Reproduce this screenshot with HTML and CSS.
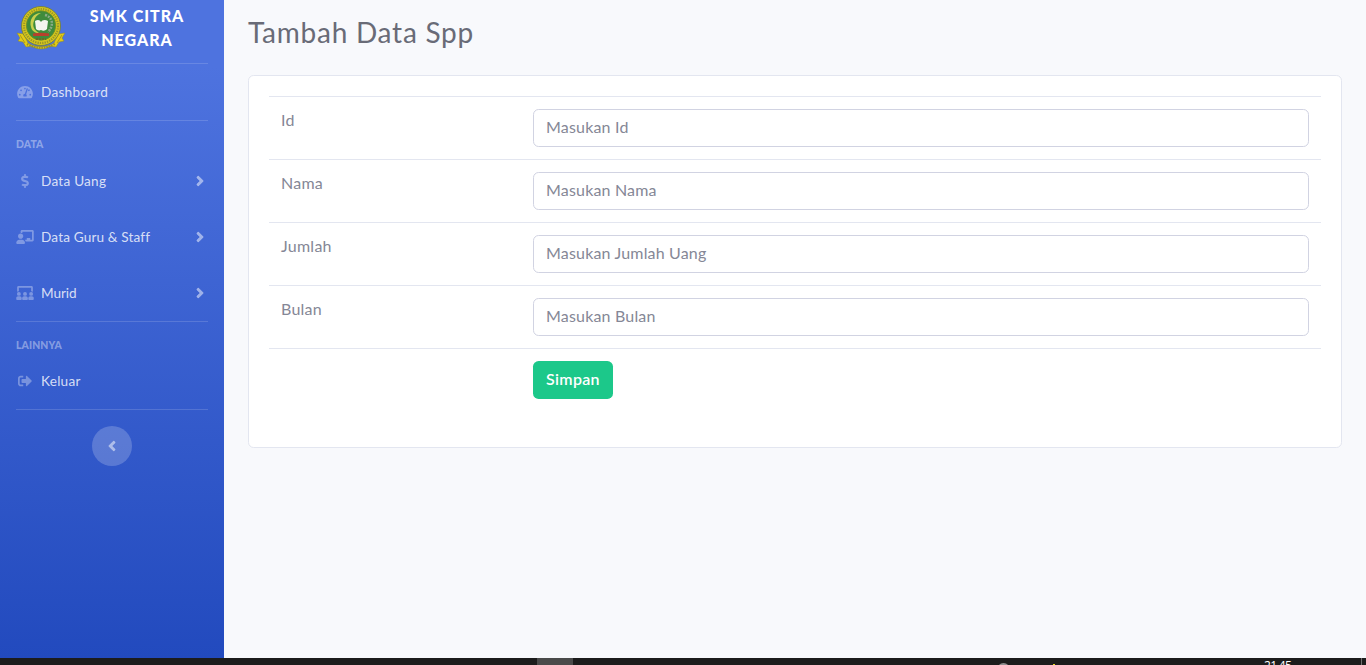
FILE: index.html
```html
<!DOCTYPE html>
<html lang="id">
<head>
<meta charset="utf-8">
<title>Tambah Data Spp</title>
<link rel="stylesheet" href="styles.css">
</head>
<body>
<div class="wrapper">
  <nav class="sidebar">
    <a class="brand">
      <svg class="logo" viewBox="0 0 50 46">
        <path d="M1 28l7 1 4 9c8 5 18 5 26 0l4-9 7-1-3 5 2 3-5 1-3 5-6-1c-6 4-12 4-18 0l-6 1-3-5-5-1 2-3z" fill="#e3cb16" stroke="#8c8a26" stroke-width=".5"/>
        <circle cx="25" cy="21" r="19.500" fill="#d5c51c" stroke="#707d32" stroke-width=".8"/>
        <circle cx="25" cy="21" r="17" fill="none" stroke="#97952a" stroke-width="2.200" stroke-dasharray="1.300 1.100"/>
        <circle cx="25" cy="20.500" r="14.700" fill="#3e8b3c" stroke="#6e8e25" stroke-width=".8"/>
        <path d="M25 8c-8 0-12 7-10 14 1 4 4 6 8 6-5-3-7-7-5-12 1-4 3-6 7-8z" fill="#c8d04c"/>
        <path d="M29 10c8 2 9 11 3 17" fill="none" stroke="#8aab88" stroke-width="2.500" stroke-dasharray="2 1"/>
        <path d="M19 16c3-2 5-1 6 1 1-2 4-3 7-1l-1 8c-2 2-4 2-6 1-2 1-4 0-5-1z" fill="#f4f5ee"/>
        <path d="M17 28.500c5-1 11-1 16 0v2.500H17z" fill="#b8402c"/>
        <path d="M20 34h10" stroke="#686c24" stroke-width="2" stroke-dasharray="2 1"/>
        <path d="M11 39c9 5 19 5 28 0" fill="none" stroke="#99931f" stroke-width="2.300" stroke-dasharray="1.500 1"/>
        <path d="M4 30l5 8M46 30l-5 8" stroke="#a89a20"/>
      </svg>
      <span class="brand-text">SMK CITRA<br>NEGARA</span>
    </a>
    <hr class="divider">
    <a class="nav-link dashboard">
      <svg class="icon" viewBox="0 0 576 512"><path fill-rule="evenodd" d="M288 32C129 32 0 161 0 320c0 52.800 14.250 102.260 39.060 144.800 5.610 9.620 16.300 15.200 27.440 15.200h443c11.140 0 21.830-5.580 27.440-15.200C561.750 422.260 576 372.800 576 320 576 161 447 32 288 32zM288 96c14.710 0 26.580 10.130 30.320 23.650l-12.670 34.340c-5.130 3.490-10.970 6.010-17.640 6.010a32 32 0 0 1 0-64zM96 384a32 32 0 1 1 0-64 32 32 0 0 1 0 64zM144 224a32 32 0 1 1 0-64 32 32 0 0 1 0 64zM390.770 151.590l-61.330 184C343.130 347.330 352 364.540 352 384c0 11.720-3.380 22.550-8.880 32H232.880c-5.500-9.450-8.880-20.280-8.880-32 0-33.940 26.500-61.430 59.900-63.590l61.340-184.010c4.170-12.560 17.730-19.450 30.360-15.170 12.570 4.190 19.350 17.790 15.170 30.360zM432 224a32 32 0 0 1-27-50l16-12a32 32 0 1 1 11 62zM480 384a32 32 0 1 1 0-64 32 32 0 0 1 0 64z"/></svg>
      <span>Dashboard</span>
    </a>
    <hr class="divider">
    <div class="heading">DATA</div>
    <a class="nav-link menu">
      <svg class="icon" viewBox="0 0 288 512"><path d="M209.200 233.400l-108-31.600C88.700 198.200 80 186.500 80 173.500c0-16.300 13.200-29.500 29.500-29.500h66.300c12.200 0 24.200 3.700 34.200 10.500 6.100 4.100 14.300 3.100 19.500-2l34.800-34c7.100-6.900 6.100-18.400-1.800-24.500C238 74.800 207.400 64.100 176 64V16c0-8.800-7.200-16-16-16h-32c-8.800 0-16 7.200-16 16v48h-2.500C45.800 64-5.400 118.700.5 183.600c4.200 46.100 39.400 83.600 83.800 96.600l102.500 30c12.500 3.700 21.200 15.300 21.200 28.300 0 16.300-13.200 29.500-29.500 29.500h-66.300C100 368 88 364.300 78 357.500c-6.100-4.100-14.300-3.100-19.500 2l-34.800 34c-7.100 6.900-6.100 18.400 1.800 24.500 24.500 19.200 55.100 29.900 86.500 30v48c0 8.800 7.200 16 16 16h32c8.800 0 16-7.200 16-16v-48.200c46.600-.9 90.300-28.600 105.700-72.700 21.500-61.600-14.600-124.800-72.500-141.700z"/></svg>
      <span>Data Uang</span>
      <svg class="arrow" viewBox="0 0 256 512"><path d="M224.300 273l-136 136c-9.400 9.400-24.600 9.400-33.900 0l-22.600-22.600c-9.400-9.400-9.400-24.600 0-33.900l96.400-96.400-96.400-96.400c-9.400-9.400-9.400-24.600 0-33.900L54.300 103c9.400-9.400 24.600-9.400 33.900 0l136 136c9.500 9.400 9.500 24.600.1 34z"/></svg>
    </a>
    <a class="nav-link menu">
      <svg class="icon" viewBox="0 0 640 512"><path d="M208 352c-2.390 0-4.780.35-7.060 1.090C187.980 357.300 174.350 360 160 360c-14.350 0-27.980-2.700-40.950-6.910-2.280-.74-4.660-1.090-7.050-1.090C49.940 352-.33 402.480 0 464.620.14 490.880 21.730 512 48 512h224c26.270 0 47.860-21.120 48-47.380.33-62.140-49.940-112.620-112-112.620zm-48-32c53.020 0 96-42.980 96-96s-42.980-96-96-96-96 42.980-96 96 42.980 96 96 96zM592 0H208c-26.470 0-48 22.250-48 49.590V96c23.420 0 45.100 6.780 64 17.800V64h352v288h-64v-64H384v64h-76.240c19.100 16.690 33.120 38.730 39.690 64H592c26.470 0 48-22.250 48-49.590V49.590C640 22.250 618.470 0 592 0z"/></svg>
      <span class="guru">Data Guru &amp; Staff</span>
      <svg class="arrow" viewBox="0 0 256 512"><path d="M224.300 273l-136 136c-9.400 9.400-24.600 9.400-33.900 0l-22.600-22.600c-9.400-9.400-9.400-24.600 0-33.900l96.400-96.400-96.400-96.400c-9.400-9.400-9.400-24.600 0-33.900L54.300 103c9.400-9.400 24.600-9.400 33.900 0l136 136c9.500 9.400 9.500 24.600.1 34z"/></svg>
    </a>
    <a class="nav-link menu">
      <svg class="icon" viewBox="0 0 640 512"><path d="M96 64h448v128c25 0 46 8 64 22V49c0-27-22-49-48-49H80C54 0 32 22 32 49v165c18-14 39-22 64-22z"/><circle cx="96" cy="288" r="72"/><circle cx="320" cy="288" r="72"/><circle cx="544" cy="288" r="72"/><path d="M64 376h64c40 0 72 32 72 72v32c0 18-14 32-32 32H32c-18 0-32-14-32-32v-40c0-35 29-64 64-64zM288 376h64c40 0 72 32 72 72v32c0 18-14 32-32 32H248c-18 0-32-14-32-32v-32c0-40 32-72 72-72zM512 376h64c35 0 64 29 64 64v40c0 18-14 32-32 32H472c-18 0-32-14-32-32v-32c0-40 32-72 72-72z"/></svg>
      <span class="murid">Murid</span>
      <svg class="arrow" viewBox="0 0 256 512"><path d="M224.300 273l-136 136c-9.400 9.400-24.600 9.400-33.900 0l-22.600-22.600c-9.400-9.400-9.400-24.600 0-33.900l96.400-96.400-96.400-96.400c-9.400-9.400-9.400-24.600 0-33.900L54.300 103c9.400-9.400 24.600-9.400 33.900 0l136 136c9.500 9.400 9.500 24.600.1 34z"/></svg>
    </a>
    <hr class="divider">
    <div class="heading lainnya">LAINNYA</div>
    <a class="nav-link keluar">
      <svg class="icon" viewBox="0 0 512 512"><path d="M497 273L329 441c-15 15-41 4.500-41-17v-96H152c-13.300 0-24-10.700-24-24v-96c0-13.300 10.700-24 24-24h136V88c0-21.400 25.900-32 41-17l168 168c9.300 9.400 9.300 24.600 0 34zM192 436v-40c0-6.600-5.400-12-12-12H96c-17.700 0-32-14.300-32-32V160c0-17.700 14.300-32 32-32h84c6.600 0 12-5.400 12-12V76c0-6.600-5.400-12-12-12H96c-53 0-96 43-96 96v192c0 53 43 96 96 96h84c6.600 0 12-5.400 12-12z"/></svg>
      <span>Keluar</span>
    </a>
    <hr class="divider">
    <button class="toggle" aria-label="Toggle"><svg class="arrow back" viewBox="0 0 256 512"><path d="M224.300 273l-136 136c-9.400 9.400-24.600 9.400-33.900 0l-22.600-22.600c-9.400-9.400-9.400-24.600 0-33.900l96.400-96.400-96.400-96.400c-9.400-9.400-9.400-24.600 0-33.900L54.300 103c9.400-9.400 24.600-9.400 33.900 0l136 136c9.500 9.400 9.500 24.600.1 34z"/></svg></button>
  </nav>
  <main class="content">
    <h1 class="title">Tambah Data Spp</h1>
    <form class="card">
      <div class="row"><label>Id</label><input class="field" placeholder="Masukan Id"></div>
      <div class="row"><label>Nama</label><input class="field" placeholder="Masukan Nama"></div>
      <div class="row"><label>Jumlah</label><input class="field" placeholder="Masukan Jumlah Uang"></div>
      <div class="row"><label>Bulan</label><input class="field" placeholder="Masukan Bulan"></div>
      <div class="row"><label></label><button class="save" type="button">Simpan</button></div>
    </form>
  </main>
</div>
<footer class="taskbar">
  <span class="task-active"></span>
  <span class="tray-disc"></span>
  <span class="tray-dot"></span>
  <span class="clock">21.45</span>
  <span class="show-desktop"></span>
</footer>
</body>
</html>
```
FILE: styles.css
```css
* { box-sizing: border-box; }
body {
  margin: 0;
  height: 665px;
  overflow: hidden;
  font: 400 16px/24px Lato, "Open Sans", sans-serif;
  color: #858796;
  background: #f8f9fc;
}
.wrapper { display: flex; height: 658px; }
.sidebar {
  width: 224px;
  flex: none;
  display: flex;
  flex-direction: column;
  background: linear-gradient(180deg, #4e73df 10%, #224abe 100%);
}
.brand { display: flex; height: 63px; padding: 4px 16px 0; color: #fff; }
.logo { width: 50px; height: 46px; margin-top: 1px; flex: none; }
.brand-text {
  flex: 1;
  text-align: center;
  font-weight: 900;
  letter-spacing: 1px;
}
.divider { height: 1px; width: 192px; margin: 0 16px; border: 0; background: rgba(255, 255, 255, .15); }
.nav-link {
  display: flex;
  align-items: center;
  padding: 0 16px;
  font-size: 13.600px;
  letter-spacing: .25px;
  color: rgba(255, 255, 255, .8);
}
.nav-link span { margin-left: 7px; flex: 1; }
.nav-link .guru { letter-spacing: .15px; }
.nav-link .murid { letter-spacing: -.1px; }
.icon { width: 18px; height: 14px; fill: rgba(255, 255, 255, .33); }
.arrow {
  width: 8px;
  height: 16px;
  margin-right: 4px;
  fill: rgba(255, 255, 255, .5);
  stroke: rgba(255, 255, 255, .5);
  stroke-width: 12;
  overflow: visible;
}
.dashboard { height: 56px; }
.menu { height: 56px; }
.heading {
  height: 32px;
  padding: 13px 16px 0;
  font-size: 10.400px;
  line-height: 20px;
  font-weight: 900;
  letter-spacing: .1px;
  color: rgba(255, 255, 255, .4);
}
.lainnya { height: 31px; }
.keluar { height: 56px; }
.toggle {
  width: 40px;
  height: 40px;
  margin: 16px auto 0;
  padding: 0;
  border: 0;
  border-radius: 50%;
  display: flex;
  align-items: center;
  justify-content: center;
  background: rgba(255, 255, 255, .2);
}
.back { transform: rotate(180deg); margin: 0; }
.content { flex: 1; padding: 16px 24px 0; }
.title {
  margin: 0 0 26px;
  font-size: 28px;
  line-height: 33px;
  font-weight: 400;
  letter-spacing: .75px;
  color: #696b77;
}
.card {
  height: 373px;
  padding: 20px;
  background: #fff;
  border: 1px solid #e3e6f0;
  border-radius: 5.600px;
}
.row {
  display: flex;
  height: 63px;
  padding: 12px;
  border-top: 1px solid #e3e6f0;
}
.row label { width: 252px; flex: none; margin-top: -1px; letter-spacing: .25px; }
.field {
  flex: 1;
  min-width: 0;
  height: 38px;
  padding: 4px 12px 8px;
  font: inherit;
  letter-spacing: .18px;
  border: 1px solid #d1d3e2;
  border-radius: 5.600px;
}
.field::placeholder { color: #858796; opacity: 1; }
.save {
  width: 80px;
  height: 38px;
  padding: 0 0 2px;
  border: 0;
  border-radius: 5.600px;
  font: inherit;
  font-weight: 600;
  letter-spacing: .3px;
  color: #fff;
  background: #1cc88a;
}
.taskbar { position: relative; height: 7px; overflow: hidden; background: #1c1c1c; }
.task-active { position: absolute; left: 537px; top: 0; width: 36px; height: 7px; background: #4a4a4a; }
.tray-disc { position: absolute; left: 997px; top: 5px; width: 13px; height: 13px; border-radius: 50%; background: #8e8e8e; }
.tray-dot { position: absolute; left: 1053px; top: 6px; width: 2px; height: 2px; background: #e8dc20; }
.clock { position: absolute; left: 1264px; top: 1px; font: 12px/13px "Open Sans", sans-serif; letter-spacing: -.7px; color: #fff; }
.show-desktop { position: absolute; left: 1361px; top: 0; width: 1px; height: 7px; background: #707070; }
```
